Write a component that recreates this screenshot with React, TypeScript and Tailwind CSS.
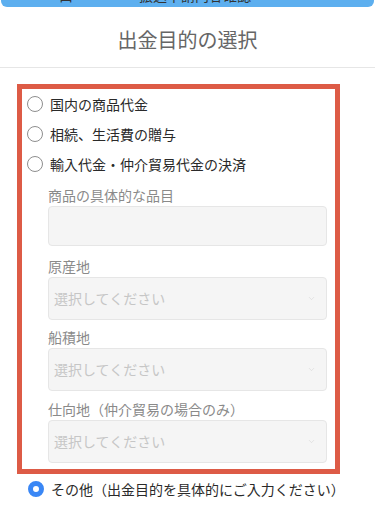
import { ChevronDown } from "lucide-react"

const font = { fontFamily: '"Noto Sans CJK JP", "Noto Sans", sans-serif' }

function Radio({ label, checked = false }: { label: string; checked?: boolean }) {
  return (
    <div className="flex items-center h-[30px] gap-[7px]">
      {checked ? (
        <span className="w-[16px] h-[16px] rounded-full border-[5px] border-[#3a87f5] bg-white shrink-0" />
      ) : (
        <span className="w-[16px] h-[16px] rounded-full border border-[#8e8e8e] bg-white shrink-0" />
      )}
      <span className="text-[14px] leading-[20px] text-[#2a2a2a]">{label}</span>
    </div>
  )
}

function SelectBox() {
  return (
    <div className="h-[43px] w-[279px] rounded-[4px] border border-[#e6e6e6] bg-[#f5f5f5] flex items-center justify-between pl-[5px] pr-[10px]">
      <span className="text-[14px] text-[#c6c6c6]">選択してください</span>
      <ChevronDown size={9} strokeWidth={1.5} className="text-[#d4d4d4]" />
    </div>
  )
}

function Field({ label, children, top }: { label: string; children: React.ReactNode; top: string }) {
  return (
    <div className={top}>
      <div className="text-[14px] leading-[20px] text-[#8a8a8a] mb-[1px]">{label}</div>
      {children}
    </div>
  )
}

export default function App() {
  return (
    <div className="w-[375px] h-[512px] bg-white overflow-hidden" style={font}>
      {/* header behind the sheet, only its bottom edge shows */}
      <div className="h-[7px] mx-[1px] rounded-b-[6px] bg-[#5dafef] overflow-hidden flex">
        <span className="ml-[58px] -mt-[15px] text-[14px] text-[#333]">口</span>
        <span className="ml-[66px] -mt-[15px] text-[14px] text-[#333]">振込申請内容確認</span>
      </div>
      <div className="pt-[19px] pb-[13px] text-center text-[20px] leading-[28px] text-[#666]">出金目的の選択</div>
      <div className="h-px bg-[#e6e6e6]" />

      <div className="mt-[16px] ml-[17px] w-[323px] border-[5px] border-[#dd5b46] pl-[5px] pb-[6px]">
        <Radio label="国内の商品代金" />
        <Radio label="相続、生活費の贈与" />
        <Radio label="輸入代金・仲介貿易代金の決済" />

        <div className="pl-[21px]">
          <Field label="商品の具体的な品目" top="mt-[6px]">
            <div className="mt-[1px] h-[40px] w-[279px] rounded-[4px] border border-[#e6e6e6] bg-[#f5f5f5]" />
          </Field>
          <Field label="原産地" top="mt-[10px]">
            <SelectBox />
          </Field>
          <Field label="船積地" top="mt-[7px]">
            <SelectBox />
          </Field>
          <Field label="仕向地（仲介貿易の場合のみ）" top="mt-[8px]">
            <SelectBox />
          </Field>
        </div>
      </div>

      <div className="pl-[28px]">
        <Radio label="その他（出金目的を具体的にご入力ください）" checked />
      </div>
    </div>
  )
}
